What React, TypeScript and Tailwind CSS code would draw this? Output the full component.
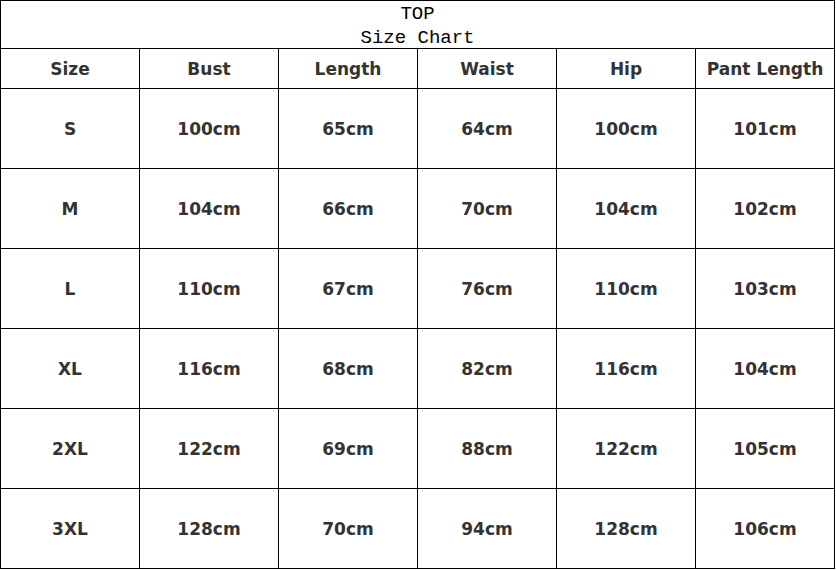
const columns = ["Size", "Bust", "Length", "Waist", "Hip", "Pant Length"]

const rows = [
  ["S", "100cm", "65cm", "64cm", "100cm", "101cm"],
  ["M", "104cm", "66cm", "70cm", "104cm", "102cm"],
  ["L", "110cm", "67cm", "76cm", "110cm", "103cm"],
  ["XL", "116cm", "68cm", "82cm", "116cm", "104cm"],
  ["2XL", "122cm", "69cm", "88cm", "122cm", "105cm"],
  ["3XL", "128cm", "70cm", "94cm", "128cm", "106cm"],
]

export default function App() {
  return (
    <div className="w-[836px] h-[570px] bg-white">
      <div className="w-[835px] grid grid-cols-[repeat(6,139px)] border-l border-t border-black text-[#333333] font-['DejaVu_Sans',sans-serif] font-bold text-[17px]">
        {/* Title */}
        <div className="col-span-6 h-[48px] pt-[1px] border-r border-b border-black flex flex-col items-center font-['Liberation_Mono',monospace] font-normal text-[19px] leading-[24px] text-black">
          <div>TOP</div>
          <div>Size Chart</div>
        </div>

        {/* Header */}
        {columns.map((c) => (
          <div key={c} className="h-[40px] pt-[2px] border-r border-b border-black flex items-center justify-center">
            {c}
          </div>
        ))}

        {/* Rows */}
        {rows.map((r) =>
          r.map((v, i) => (
            <div key={r[0] + i} className="h-[80px] pt-[3px] border-r border-b border-black flex items-center justify-center">
              {v}
            </div>
          ))
        )}
      </div>
    </div>
  )
}
